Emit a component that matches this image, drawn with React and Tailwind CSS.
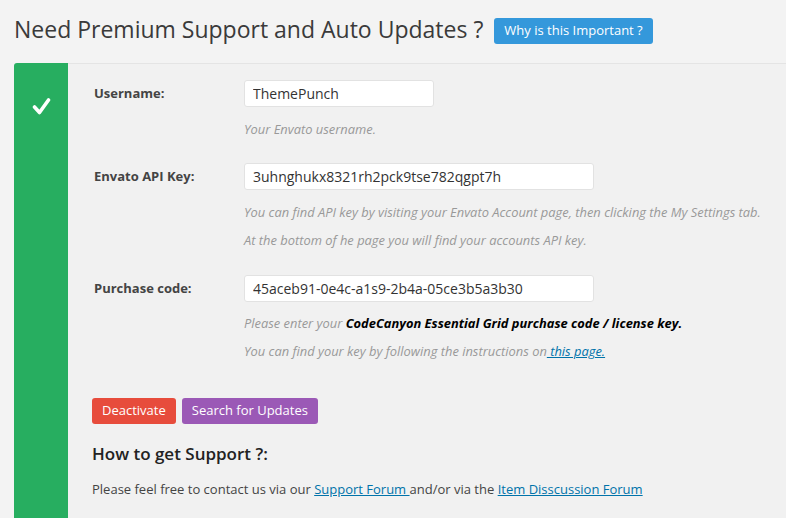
const font = { fontFamily: '"Open Sans", "Liberation Sans", sans-serif' };

const Hint = ({ children, className = "" }) => (
  <p className={`text-[12.9px] leading-[20px] italic text-[#999] ${className}`}>{children}</p>
);

const Field = ({ label, value, width, className = "" }) => (
  <div className={`flex items-center ${className}`}>
    <label className="w-[152px] text-[13px] font-bold text-[#444] pl-[2px]">{label}</label>
    <input
      readOnly
      value={value}
      className={`${width} h-[27px] bg-white border border-[#e2e2e2] rounded-[3px] px-[8px] text-[14px] text-[#333] outline-none`}
      style={font}
    />
  </div>
);

export default function App() {
  return (
    <div className="w-[786px] h-[518px] overflow-hidden bg-[#f3f3f3]" style={font}>
      <div className="h-[63px] flex items-center pl-[14px] pb-[4px]">
        <h1 className="text-[23px] text-[#3a3a3a] font-normal">Need Premium Support and Auto Updates ?</h1>
        <button className="ml-[11px] mt-[2px] h-[26px] px-[10px] rounded-[3px] bg-[#3498db] text-white text-[13px]">
          Why is this Important ?
        </button>
      </div>

      <div className="flex ml-[14px] h-[460px]">
        <div className="w-[54px] bg-[#27ae60] rounded-tl-[3px] flex justify-center pt-[34px]">
          <svg width="19" height="19" viewBox="0 0 19 19">
            <polyline points="2.5,10 7.5,15.5 16.5,3" fill="none" stroke="white" strokeWidth="3.6" strokeLinecap="round" strokeLinejoin="round" />
          </svg>
        </div>

        <div className="flex-1 bg-[#f1f1f1] border-t border-[#e4e4e4] pl-[24px] pt-[16px]">
          <Field label="Username:" value="ThemePunch" width="w-[190px]" />
          <div className="pl-[152px]">
            <Hint className="mt-[12px]">Your Envato username.</Hint>
          </div>

          <Field label="Envato API Key:" value="3uhnghukx8321rh2pck9tse782qgpt7h" width="w-[350px]" className="mt-[24px]" />
          <div className="pl-[152px]">
            <Hint className="mt-[12px]">
              You can find API key by visiting your Envato Account page, then clicking the My Settings tab.
            </Hint>
            <Hint className="mt-[8px]">At the bottom of he page you will find your accounts API key.</Hint>
          </div>

          <Field label="Purchase code:" value="45aceb91-0e4c-a1s9-2b4a-05ce3b5a3b30" width="w-[350px]" className="mt-[25px]" />
          <div className="pl-[152px]">
            <Hint className="mt-[11px]">
              Please enter your{" "}
              <strong className="text-black font-bold">CodeCanyon Essential Grid purchase code / license key.</strong>
            </Hint>
            <Hint className="mt-[8px]">
              You can find your key by following the instructions on
              <a href="#" className="text-[#0073aa] underline"> this page.</a>
            </Hint>
          </div>

          <div className="flex gap-[6px] mt-[37px]">
            <button className="h-[26px] px-[10px] rounded-[3px] bg-[#e74c3c] text-white text-[13px]">Deactivate</button>
            <button className="h-[26px] px-[10px] rounded-[3px] bg-[#9b59b6] text-white text-[13px]">Search for Updates</button>
          </div>

          <h3 className="mt-[18px] text-[17px] leading-[24px] font-semibold text-[#222]">How to get Support ?:</h3>
          <p className="mt-[13px] text-[13px] leading-[20px] text-[#444]">
            Please feel free to contact us via our{" "}
            <a href="#" className="text-[#0073aa] underline">Support Forum </a>
            and/or via the{" "}
            <a href="#" className="text-[#0073aa] underline">Item Disscussion Forum</a>
          </p>
        </div>
      </div>
    </div>
  );
}
